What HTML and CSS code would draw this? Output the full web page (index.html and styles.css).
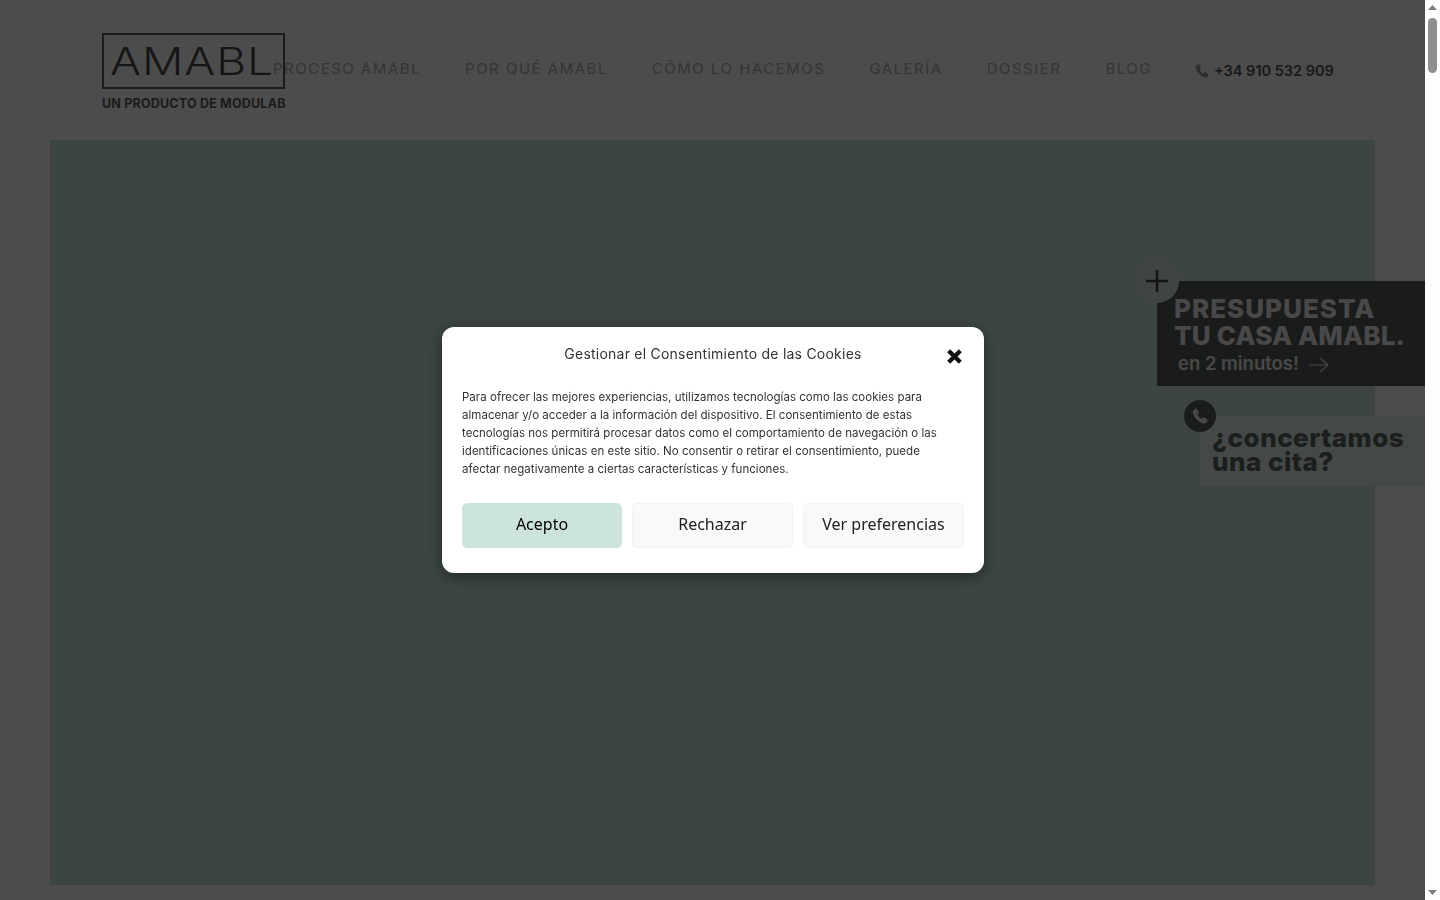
FILE: index.html
```html
<!DOCTYPE html>
<html lang="es">
<head>
<meta charset="utf-8">
<title>AMABL</title>
<link rel="stylesheet" href="styles.css">
</head>
<body>
<header class="header">
  <a class="logo">
    <span class="logo-box"><span class="logo-word">AMABL</span></span>
    <span class="logo-sub">UN PRODUCTO DE MODULAB</span>
  </a>
  <nav class="nav">
    <a class="nav-link">PROCESO AMABL</a>
    <a class="nav-link">POR QUÉ AMABL</a>
    <a class="nav-link">CÓMO LO HACEMOS</a>
    <a class="nav-link">GALERÍA</a>
    <a class="nav-link">DOSSIER</a>
    <a class="nav-link">BLOG</a>
  </nav>
  <a class="phone">
    <svg class="phone-icon" viewBox="0 0 24 24"><path d="M5 2.500c1-.8 2.300-.7 3 .3l2 3c.6.900.5 2-.2 2.800L8.600 10c1 2.400 3 4.600 5.400 5.800l1.400-1.200c.8-.7 1.900-.8 2.800-.2l3 2c1 .7 1.100 2.100.3 3l-1.500 1.700c-.8.900-2 1.200-3.100.9C10 20 4.300 14.300 2.500 7.500c-.3-1.100.1-2.300.9-3.200z"/></svg>
    <span>+34 910 532 909</span>
  </a>
</header>
<main class="hero"></main>

<aside class="side">
  <div class="quote">
    <span class="plus"><svg viewBox="0 0 24 24"><path d="M12 1v22M1 12h22"/></svg></span>
    <p class="quote-title"><span class="quote-line-a">PRESUPUESTA</span><br><span class="quote-line-b">TU CASA AMABL.</span></p>
    <p class="quote-sub">en 2 minutos!<svg class="arrow" viewBox="0 0 22 16"><path d="M1 8h19M12 1l8 7-8 7"/></svg></p>
  </div>
  <div class="appointment">
    <span class="call"><svg viewBox="0 0 24 24"><path d="M5 2.500c1-.8 2.300-.7 3 .3l2 3c.6.900.5 2-.2 2.800L8.600 10c1 2.400 3 4.600 5.400 5.800l1.400-1.200c.8-.7 1.900-.8 2.800-.2l3 2c1 .7 1.100 2.100.3 3l-1.500 1.700c-.8.900-2 1.200-3.100.9C10 20 4.300 14.300 2.500 7.500c-.3-1.100.1-2.300.9-3.200z"/></svg></span>
    <p class="appointment-text">¿concertamos<br>una cita?</p>
  </div>
</aside>

<div class="overlay"></div>

<section class="modal">
  <div class="modal-head">
    <h2 class="modal-title">Gestionar el Consentimiento de las Cookies</h2>
    <svg class="close" viewBox="0 0 16 16"><path d="M2.500 2.500l11 11M13.500 2.500l-11 11"/></svg>
  </div>
  <p class="modal-body">Para ofrecer las mejores experiencias, utilizamos tecnologías como las cookies para<br>almacenar y/o acceder a la información del dispositivo. El consentimiento de estas<br>tecnologías nos permitirá procesar datos como el comportamiento de navegación o las<br>identificaciones únicas en este sitio. No consentir o retirar el consentimiento, puede<br>afectar negativamente a ciertas características y funciones.</p>
  <div class="modal-actions">
    <button class="btn btn-accept">Acepto</button>
    <button class="btn">Rechazar</button>
    <button class="btn">Ver preferencias</button>
  </div>
</section>

<div class="scrollbar">
  <svg class="scroll-arrow" viewBox="0 0 15 15"><path d="M7.500 5l4.500 5H3z"/></svg>
  <span class="scroll-thumb"></span>
  <svg class="scroll-arrow scroll-arrow-down" viewBox="0 0 15 15"><path d="M3 5h9l-4.500 5z"/></svg>
</div>
</body>
</html>
```

FILE: styles.css
```css
* { box-sizing: border-box; }
body { margin: 0; padding-right: 15px; background: #fff; font-family: "Inter", "Liberation Sans", sans-serif; color: #1c1c1c; height: 900px; overflow: hidden; }
p, h2 { margin: 0; }

.header { height: 140px; display: flex; align-items: flex-start; padding-left: 102px; }
.logo { width: 171px; margin-top: 33px; display: flex; flex-direction: column; flex: none; }
.logo-box { width: 183px; height: 56px; flex: none; border: 2px solid #5d5d5d; font-weight: 300; font-size: 38px; line-height: 52px; padding-left: 6px; color: #4a4a4a; }
.logo-word { display: inline-block; transform: scaleX(1.21); transform-origin: left center; letter-spacing: .8px; }
.logo-sub { width: 183px; margin-top: 8px; font-weight: 700; font-size: 12.5px; line-height: 14px; letter-spacing: .2px; white-space: nowrap; color: #5d5d5d; }

.nav { display: flex; gap: 44px; margin-top: 60px; }
.nav-link { font-size: 15px; line-height: 18px; letter-spacing: 1.5px; color: #b0b0b0; white-space: nowrap; }
.phone { display: flex; align-items: center; gap: 4px; margin: 62px 0 0 42px; font-size: 14.5px; line-height: 18px; font-weight: 600; color: #555; }
.phone-icon { width: 16px; height: 16px; fill: #93a69c; }

.hero { height: 745px; margin: 0 50px; background: #c8e8d8; }

.side { position: fixed; top: 259px; right: 15px; width: 290px; }
.quote { position: relative; margin: 22px 0 0 22px; height: 105px; padding: 14px 0 0 17px; background: #585c5a; color: #fff; }
.plus { position: absolute; left: -22px; top: -22px; width: 44px; height: 44px; border-radius: 50%; background: #d8e6df; display: flex; align-items: center; justify-content: center; }
.plus svg { width: 24px; height: 24px; fill: none; stroke: #444; stroke-width: 2.500; }
.quote-title { font-weight: 800; font-size: 26px; line-height: 27px; color: #f0f0f0; white-space: nowrap; }
.quote-line-a { letter-spacing: 1px; }
.quote-line-b { letter-spacing: .2px; }
.quote-sub { margin: 1px 0 0 4px; font-weight: 600; font-size: 18.5px; line-height: 26px; display: flex; align-items: center; gap: 9px; color: #f0f0f0; }
.arrow { width: 22px; height: 16px; margin-top: 3px; fill: none; stroke: #f0f0f0; stroke-width: 1.200; }
.appointment { position: relative; margin: 30px 0 0 65px; height: 70px; padding: 10px 0 0 12px; background: #e4f2ec; }
.call { position: absolute; left: -16px; top: -16px; width: 32px; height: 32px; border-radius: 50%; background: #585c5a; display: flex; align-items: center; justify-content: center; }
.call svg { width: 18px; height: 18px; fill: #f0f0f0; }
.appointment-text { font-weight: 800; font-size: 26px; line-height: 24px; letter-spacing: .5px; color: #5f6562; white-space: nowrap; }

.overlay { position: fixed; top: 0; left: 0; bottom: 0; right: 15px; background: rgba(0,0,0,.7); }

.modal { position: fixed; left: 442px; top: 327px; width: 542px; height: 246px; padding: 20px; background: #fff; border-radius: 12px; box-shadow: 0 4px 14px rgba(0,0,0,.4); }
.modal-head { position: relative; height: 14px; margin-bottom: 27px; }
.modal-title { text-align: center; font-size: 14px; line-height: 14px; font-weight: 400; letter-spacing: .23px; color: #333; }
.close { position: absolute; right: 1.500px; top: 1px; width: 17px; height: 17px; fill: none; stroke: #111; stroke-width: 4; }
.modal-body { font-size: 11.5px; line-height: 18px; letter-spacing: .03px; color: #333; white-space: nowrap; }
.modal-actions { display: grid; grid-template-columns: 160px 161px 161px; gap: 10px; margin-top: 25px; }
.btn { height: 45px; border: 1px solid #f2f2f2; border-radius: 5px; background: #f9f9f9; font-family: "Noto Sans", sans-serif; font-size: 16px; line-height: 22px; padding: 0 0 4px; color: #222; }
.btn-accept { background: #cce4da; border-color: #cce4da; color: #000; }

.scrollbar { position: fixed; top: 0; right: 0; bottom: 0; width: 15px; background: #fdfdfd; display: flex; flex-direction: column; align-items: center; }
.scroll-arrow { width: 15px; height: 15px; flex: none; fill: #7d7d7d; }
.scroll-arrow-down { margin-top: auto; }
.scroll-thumb { width: 9px; height: 55px; margin-top: 3px; border-radius: 5px; background: #8f8f8f; }
```
